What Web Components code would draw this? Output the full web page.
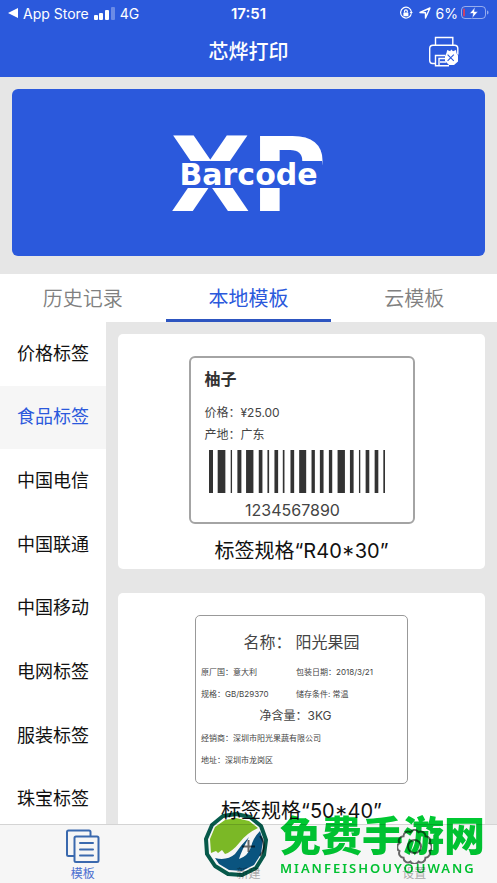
<!DOCTYPE html>
<html lang="zh-CN">
<head>
<meta charset="utf-8">
<meta name="viewport" content="width=device-width, initial-scale=1">
<title>芯烨打印</title>
<style>
  body {
    margin: 0;
    font-family: Inter, "Noto Sans CJK SC", sans-serif;
    color: #111;
    background: #e6e6e6;
    --blue: #2b59dc;
  }
</style>
</head>
<body>
<xp-app></xp-app>

<script>
function define(name, html) {
  const tmpl = document.createElement("template");
  tmpl.innerHTML = html;
  customElements.define(name, class extends HTMLElement {
    constructor() {
      super();
      this.attachShadow({ mode: "open" });
      this.shadowRoot.appendChild(tmpl.content.cloneNode(true));
    }
  });
}

define("status-bar", `
<style>
  :host {
    display: grid;
    grid-template-columns: 1fr auto 1fr;
    align-items: center;
    height: 26px;
    padding: 0 8px;
    font-size: 14px;
    color: #fff;
  }
  div { display: flex; align-items: center; gap: 5px; }
  .right { justify-content: flex-end; gap: 3px; }
  b { font-weight: 600; font-size: 15px; }
  svg { display: block; }
</style>
<div>
  <svg width="10" height="10" viewBox="0 0 10 10"><path d="M0 5L10 0v10z" fill="#fff"/></svg>
  <span>App Store</span>
  <svg width="21" height="13" viewBox="0 0 21 13" fill="#fff">
    <rect y="8" width="4" height="5" rx="1"/><rect x="5" y="6" width="4" height="7" rx="1"/>
    <rect x="11" y="3" width="4" height="10" rx="1"/><rect x="17" width="4" height="13" rx="1" opacity=".3"/>
  </svg>
  <span>4G</span>
</div>
<b>17:51</b>
<div class="right">
  <svg width="14" height="14" viewBox="0 0 14 14" fill="none" stroke="#fff" stroke-width="1.2">
    <path d="M12.2 8.2A5.4 5.4 0 1 1 12.4 6"/><path d="M10.6 6h3.2l-1.6 2.2z" fill="#fff" stroke="none"/>
    <rect x="4.4" y="6.4" width="5" height="3.8" rx=".6" fill="#fff" stroke="none"/><path d="M5.5 6.4V5.2a1.4 1.4 0 0 1 2.8 0v1.2"/>
  </svg>
  <svg width="17" height="12" viewBox="0 0 17 12" fill="none" stroke="#fff" stroke-width="1.4" stroke-linejoin="round"><path d="M4 5.500L14 1l-4.500 10V5.800z"/></svg>
  <span>6%</span>
  <svg width="28" height="14" viewBox="0 0 28 14">
    <rect x=".5" y=".5" width="24" height="12" rx="3.5" fill="none" stroke="#fff" opacity=".5"/>
    <rect x="2" y="2.5" width="2" height="8" rx="1" fill="#c8416c"/>
    <path d="M26 4.5c2 .6 2 3.400 0 4z" fill="#fff" opacity=".5"/>
    <path d="M14.200 1L8.500 7.500h3.500L11 12.500l6-7h-3.600z" fill="#fff" stroke="#2b59dc" stroke-width=".6"/>
  </svg>
</div>
`);

define("title-bar", `
<style>
  :host {
    display: grid;
    grid-template-columns: 1fr auto 1fr;
    align-items: center;
    height: 51px;
    color: #fff;
  }
  h1 { grid-column: 2; margin: 0; font-size: 20px; line-height: 28px; font-weight: 500; }
  button {
    justify-self: end;
    margin-right: 37px;
    padding: 0;
    border: 0;
    background: none;
  }
  svg { display: block; }
</style>
<h1>芯烨打印</h1>
<button aria-label="打印机">
  <svg width="32" height="32" viewBox="0 0 32 32" fill="none" stroke="#fff" stroke-width="1.400">
    <path d="M7.500 9.300V1.500h17.300v7.800"/>
    <path d="M7 27.500H4.500Q1.700 27.500 1.700 24.500V12.500Q1.700 9.300 5 9.300h21.500q3.300 0 3.300 3.200v6"/>
    <path d="M17 19.500H7.500V29.800H21M11 29v-6.500h6M12 26h6"/>
    <path d="M18.500 17l.7-3 3 1.200 1-1.800 1.800 1.800 3-1.200.5 3.200 1.500 2.300v6l-4 3.500h-5l-4-4v-5z" fill="#fff" stroke="none"/>
    <path d="M19.600 18.600l6.200 6.200M25.800 18.600l-6.200 6.200" stroke="#2b59dc" stroke-width="1.100"/>
  </svg>
</button>
`);

define("brand-banner", `
<style>
  :host {
    display: grid;
    place-content: center;
    box-sizing: border-box;
    margin: 12px 12px 18px;
    padding-top: 4px;
    height: 167px;
    border-radius: 6px;
    color: #fff;
    background: var(--blue);
    font-family: "DejaVu Sans", sans-serif;
    font-weight: bold;
  }
  span { grid-area: 1 / 1; place-self: center; }
  .mark { font-size: 104px; line-height: 112px; }
  .name { padding: 0 4px; font-size: 30px; line-height: 27px; background: var(--blue); }
</style>
<span class="mark">XP</span>
<span class="name">Barcode</span>
`);

define("top-tabs", `
<style>
  :host { display: block; background: #fff; }
  nav { display: grid; grid-template-columns: repeat(3, 1fr); }
  a {
    padding: 10px 0 5px;
    border-bottom: 3px solid transparent;
    font-size: 20px;
    line-height: 30px;
    font-weight: 350;
    text-align: center;
    text-decoration: none;
    color: #808080;
  }
  a[aria-current] { color: var(--blue); border-color: #2d55c0; font-weight: 400; }
</style>
<nav>
  <a href="#history">历史记录</a>
  <a href="#local" aria-current="page">本地模板</a>
  <a href="#cloud">云模板</a>
</nav>
`);

define("category-list", `
<style>
  :host { display: flex; width: 106px; background: #fff; }
  nav { flex: 1; display: flex; flex-direction: column; padding-bottom: 52px; }
  a {
    flex: 1;
    display: grid;
    place-items: center;
    min-height: 48px;
    font-size: 18px;
    line-height: 26px;
    text-decoration: none;
    color: #111;
  }
  a[aria-current] { color: var(--blue); background: #f6f6f6; }
</style>
<nav>
  <a href="#price">价格标签</a>
  <a href="#food" aria-current="true">食品标签</a>
  <a href="#telecom">中国电信</a>
  <a href="#unicom">中国联通</a>
  <a href="#mobile">中国移动</a>
  <a href="#grid">电网标签</a>
  <a href="#clothes">服装标签</a>
  <a href="#jewelry">珠宝标签</a>
</nav>
`);

define("template-card", `
<style>
  :host {
    display: flex;
    flex-direction: column;
    align-items: center;
    padding: 22px 0 3px;
    border-radius: 5px;
    background: #fff;
  }
  p { margin: 12px 0 0; font-size: 20px; line-height: 30px; }
</style>
<slot></slot>
<p><slot name="caption"></slot></p>
`);

define("price-label", `
<style>
  :host {
    display: block;
    box-sizing: border-box;
    width: 226px;
    padding: 9px 14px 1px;
    border: 2px solid #a4a4a4;
    border-radius: 6px;
    font-size: 12px;
    line-height: 22px;
    color: #444;
  }
  h2 { margin: 0 0 11px; font-size: 16px; line-height: 24px; font-weight: 600; color: #333; }
  p { margin: 0; }
  svg { display: block; width: 176px; height: 43px; margin: 4px 4px 6px; }
  .code { padding-right: 18px; font-size: 16px; line-height: 22px; text-align: center; }
</style>
<h2>柚子</h2>
<p>价格：¥25.00</p>
<p>产地：广东</p>
<svg viewBox="0 0 527 129" preserveAspectRatio="none" fill="#333">
  <path d="M0 0h12v129H0zM26 0h23v129H26zM65 0h4v129h-4zM85 0h12v129H85zM111 0h22v129h-22zM149 0h11v129h-11zM175 0h5v129h-5zM196 0h11v129h-11zM221 0h5v129h-5zM244 0h11v129h-11zM270 0h21v129h-21zM307 0h10v129h-10zM332 0h11v129h-11zM359 0h10v129h-10zM385 0h22v129h-22zM422 0h11v129h-11zM449 0h4v129h-4zM469 0h11v129h-11zM496 0h11v129h-11zM522 0h5v129h-5z"/>
</svg>
<p class="code">1234567890</p>
`);

define("food-label", `
<style>
  :host {
    display: block;
    box-sizing: border-box;
    width: 213px;
    padding: 14px 5px 12px;
    border: 1px solid #999;
    border-radius: 5px;
    font-size: 8px;
    line-height: 22px;
    color: #444;
  }
  h2 { margin: 0 0 7px; font-size: 16px; line-height: 24px; font-weight: 400; text-align: center; }
  h2 span { margin-left: 4px; }
  div { display: grid; grid-template-columns: 95px 1fr; }
  p { margin: 0; }
  .net { padding-right: 12px; font-size: 12px; text-align: center; }
</style>
<h2>名称：<span>阳光果园</span></h2>
<div>
  <p>原厂国：意大利</p><p>包装日期：2018/3/21</p>
  <p>规格：GB/B29370</p><p>储存条件: 常温</p>
</div>
<p class="net">净含量：3KG</p>
<p>经销商：深圳市阳光果蔬有限公司</p>
<p>地址：深圳市龙岗区</p>
`);

define("bottom-bar", `
<style>
  :host {
    position: fixed;
    inset: auto 0 0;
    border-top: 1px solid #d4d4d4;
    background: #f6f6f6;
  }
  nav { display: grid; grid-template-columns: repeat(3, 1fr); }
  a {
    display: flex;
    flex-direction: column;
    align-items: center;
    gap: 2px;
    padding: 4px 0 1px;
    font-size: 12px;
    line-height: 16px;
    text-decoration: none;
    color: #aaa;
  }
  a[aria-current] { color: #4a6fd0; }
  svg { width: 35px; height: 35px; fill: none; stroke: #666; stroke-width: 2; }
  a[aria-current] svg { stroke: #3a69ae; }
</style>
<nav>
  <a href="#templates" aria-current="page">
    <svg viewBox="0 0 35 35" stroke-linecap="round"><path d="M9 27H3.500Q2 27 2 25.500V3q0-1.500 1.500-1.500H24Q25.500 1.500 25.500 3v3.500"/><rect x="9.500" y="7.500" width="24" height="25.500" rx="1.500"/><path d="M15 14h13M15 20.500h13M15 26.500h13"/></svg>
    模板
  </a>
  <a href="#new">
    <svg viewBox="0 0 35 35"><path d="M29 7a15 15 0 0 1 0 20M17.500 11v12M11 17.500h13"/></svg>
    新建
  </a>
  <a href="#settings">
    <svg viewBox="0 0 35 35">
      <path d="M13.500 3.200a4.600 4.600 0 0 1 8 0a4.600 4.600 0 0 1 7 4a4.600 4.600 0 0 1 4 7a4.600 4.600 0 0 1 0 8a4.600 4.600 0 0 1-4 6.500a4.600 4.600 0 0 1-7 4a4.600 4.600 0 0 1-8 0a4.600 4.600 0 0 1-7-4a4.600 4.600 0 0 1-4-6.500a4.600 4.600 0 0 1 0-8a4.600 4.600 0 0 1 4-7a4.600 4.600 0 0 1 7-4z"/>
      <circle cx="17.500" cy="17.500" r="6.500"/>
    </svg>
    设置
  </a>
</nav>
`);

/* site badge floating over the bottom bar */
define("site-badge", `
<style>
  :host {
    position: fixed;
    right: 12px;
    bottom: 5px;
    display: flex;
    align-items: center;
    gap: 12px;
    white-space: nowrap;
    pointer-events: none;
    mix-blend-mode: multiply;
    color: #00c832;
  }
  strong { display: block; font-size: 41px; line-height: 46px; font-weight: 900; }
  small { display: block; font-size: 13px; line-height: 18px; font-weight: 600; letter-spacing: 2px; font-family: "Noto Sans", sans-serif; }
  svg { display: block; width: 64px; height: 66px; }
</style>
<svg viewBox="0 0 64 66">
  <path d="M32 2L46 5 57 14 62 28 60 43 52 56 38 63 24 62 11 54 3 42 2 27 8 13 19 4z" fill="#fff" stroke="#075c4d" stroke-width="4" stroke-linejoin="round"/>
  <path d="M32 6L45 9 54 16Q43 21 36 30Q28 40 21 42L18 38 14 41 12 39 7 41L6 27 11 15 21 8z" fill="#80bf27"/>
  <path d="M11 46Q23 49 31 42Q37 33 45 25Q37 40 35 47Q44 44 47 35Q49 26 56 19L59 28 57 42 50 53 38 59 25 58 15 52z" fill="#0a5784"/>
</svg>
<div>
  <strong>免费手游网</strong>
  <small>MIANFEISHOUYOUWANG</small>
</div>
`);

define("xp-app", `
<style>
  :host { display: flex; flex-direction: column; height: 100vh; overflow: hidden; }
  header { background: var(--blue); }
  main { flex: 1; display: flex; min-height: 0; }
  section {
    flex: 1;
    display: flex;
    flex-direction: column;
    gap: 24px;
    padding: 12px 12px 0;
  }
</style>
<header>
  <status-bar></status-bar>
  <title-bar></title-bar>
</header>
<brand-banner></brand-banner>
<top-tabs></top-tabs>
<main>
  <category-list></category-list>
  <section>
    <template-card>
      <price-label></price-label>
      <span slot="caption">标签规格“R40*30”</span>
    </template-card>
    <template-card>
      <food-label></food-label>
      <span slot="caption">标签规格“50*40”</span>
    </template-card>
  </section>
</main>
<bottom-bar></bottom-bar>
<site-badge></site-badge>
`);
</script>
</body>
</html>
